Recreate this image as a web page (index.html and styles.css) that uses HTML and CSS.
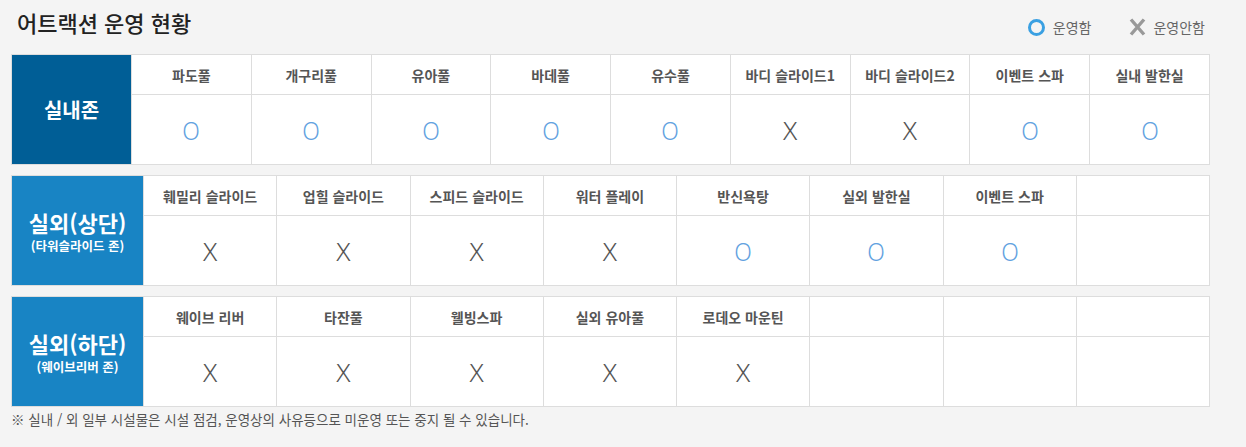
FILE: index.html
```html
<!DOCTYPE html>
<html lang="ko">
<head>
<meta charset="utf-8">
<link rel="stylesheet" href="styles.css">
</head>
<body>
<div class="wrap">
  <div class="top">
    <h2 class="title">어트랙션 운영 현황</h2>
    <div class="legend">
      <span class="lg-item"><span class="ring"></span>운영함</span>
      <span class="lg-item"><svg class="xico" width="17" height="18" viewBox="0 0 17 18"><path d="M2 1.5 L15 16.5 M15 1.5 L2 16.5" stroke="#999" stroke-width="3.4" fill="none"/></svg>운영안함</span>
    </div>
  </div>

  <table class="zone-table t9">
    <colgroup><col class="zc1"><col span="9"></colgroup>
    <tr class="hd">
      <th rowspan="2" class="zone dark"><span class="zn">실내존</span></th>
      <td>파도풀</td><td>개구리풀</td><td>유아풀</td><td>바데풀</td><td>유수풀</td><td>바디 슬라이드1</td><td>바디 슬라이드2</td><td>이벤트 스파</td><td>실내 발한실</td>
    </tr>
    <tr class="bd">
      <td class="o"><span>O</span></td><td class="o"><span>O</span></td><td class="o"><span>O</span></td><td class="o"><span>O</span></td><td class="o"><span>O</span></td><td class="x">X</td><td class="x">X</td><td class="o"><span>O</span></td><td class="o"><span>O</span></td>
    </tr>
  </table>

  <table class="zone-table t8">
    <colgroup><col class="zc2"><col span="8"></colgroup>
    <tr class="hd">
      <th rowspan="2" class="zone light"><span class="zn">실외(상단)</span><span class="zs">(타워슬라이드 존)</span></th>
      <td>훼밀리 슬라이드</td><td>업힐 슬라이드</td><td>스피드 슬라이드</td><td>워터 플레이</td><td>반신욕탕</td><td>실외 발한실</td><td>이벤트 스파</td><td></td>
    </tr>
    <tr class="bd">
      <td class="x">X</td><td class="x">X</td><td class="x">X</td><td class="x">X</td><td class="o"><span>O</span></td><td class="o"><span>O</span></td><td class="o"><span>O</span></td><td></td>
    </tr>
  </table>

  <table class="zone-table t8">
    <colgroup><col class="zc2"><col span="8"></colgroup>
    <tr class="hd">
      <th rowspan="2" class="zone light"><span class="zn">실외(하단)</span><span class="zs">(웨이브리버 존)</span></th>
      <td>웨이브 리버</td><td>타잔풀</td><td>웰빙스파</td><td>실외 유아풀</td><td>로데오 마운틴</td><td></td><td></td><td></td>
    </tr>
    <tr class="bd">
      <td class="x">X</td><td class="x">X</td><td class="x">X</td><td class="x">X</td><td class="x">X</td><td></td><td></td><td></td>
    </tr>
  </table>

  <p class="note">※ 실내 / 외 일부 시설물은 시설 점검, 운영상의 사유등으로 미운영 또는 중지 될 수 있습니다.</p>
</div>
</body>
</html>
```

FILE: styles.css
```css
html, body {
  margin: 0;
  padding: 0;
  background: #f4f4f4;
}
body {
  font-family: "Noto Sans CJK KR", "Noto Sans", sans-serif;
  color: #555;
}
.wrap {
  width: 1199px;
  margin-left: 11px;
}
.top {
  display: flex;
  justify-content: space-between;
  align-items: flex-start;
  height: 54px;
}
.title {
  margin: 0;
  padding: 6px 0 0 6px;
  font-size: 22px;
  line-height: 32px;
  font-weight: 500;
  color: #222;
}
.legend {
  display: flex;
  gap: 38px;
  padding: 16px 5px 0 0;
  font-size: 14px;
  line-height: 22px;
  color: #666;
}
.lg-item {
  display: flex;
  align-items: center;
}
.ring {
  width: 11px;
  height: 11px;
  border: 3px solid #3aa0e2;
  border-radius: 50%;
  margin-right: 8px;
}
.xico {
  margin-right: 7px;
}
.zone-table {
  width: 1199px;
  table-layout: fixed;
  border-collapse: collapse;
  border: 1px solid #ddd;
  background: #fff;
  margin-bottom: 10px;
}
.zc1 { width: 120px; }
.zc2 { width: 132px; }
.zone-table td {
  border: 1px solid #ddd;
  text-align: center;
  padding: 0;
}
.hd td {
  height: 39px;
  font-size: 14px;
  font-weight: 700;
  color: #555;
}
.bd td {
  height: 69px;
  font-size: 26px;
  font-family: "Noto Sans", sans-serif;
  font-weight: 300;
}
.o { color: #62a2e0; }
.o span {
  display: inline-block;
  transform: scaleX(0.88);
}
.x { color: #555; }
.zone {
  padding: 0;
  color: #fff;
  text-align: center;
  vertical-align: middle;
}
.dark { background: #005e96; }
.light { background: #1884c4; }
.zn {
  display: block;
  font-size: 20px;
  font-weight: 700;
  line-height: 28px;
}
.light .zn {
  font-size: 22px;
  line-height: 30px;
}
.zs {
  display: block;
  font-size: 12.5px;
  font-weight: 700;
  line-height: 18px;
}
.note {
  margin: -9px 0 0 0;
  font-size: 13.5px;
  line-height: 22px;
  color: #555;
}
```
